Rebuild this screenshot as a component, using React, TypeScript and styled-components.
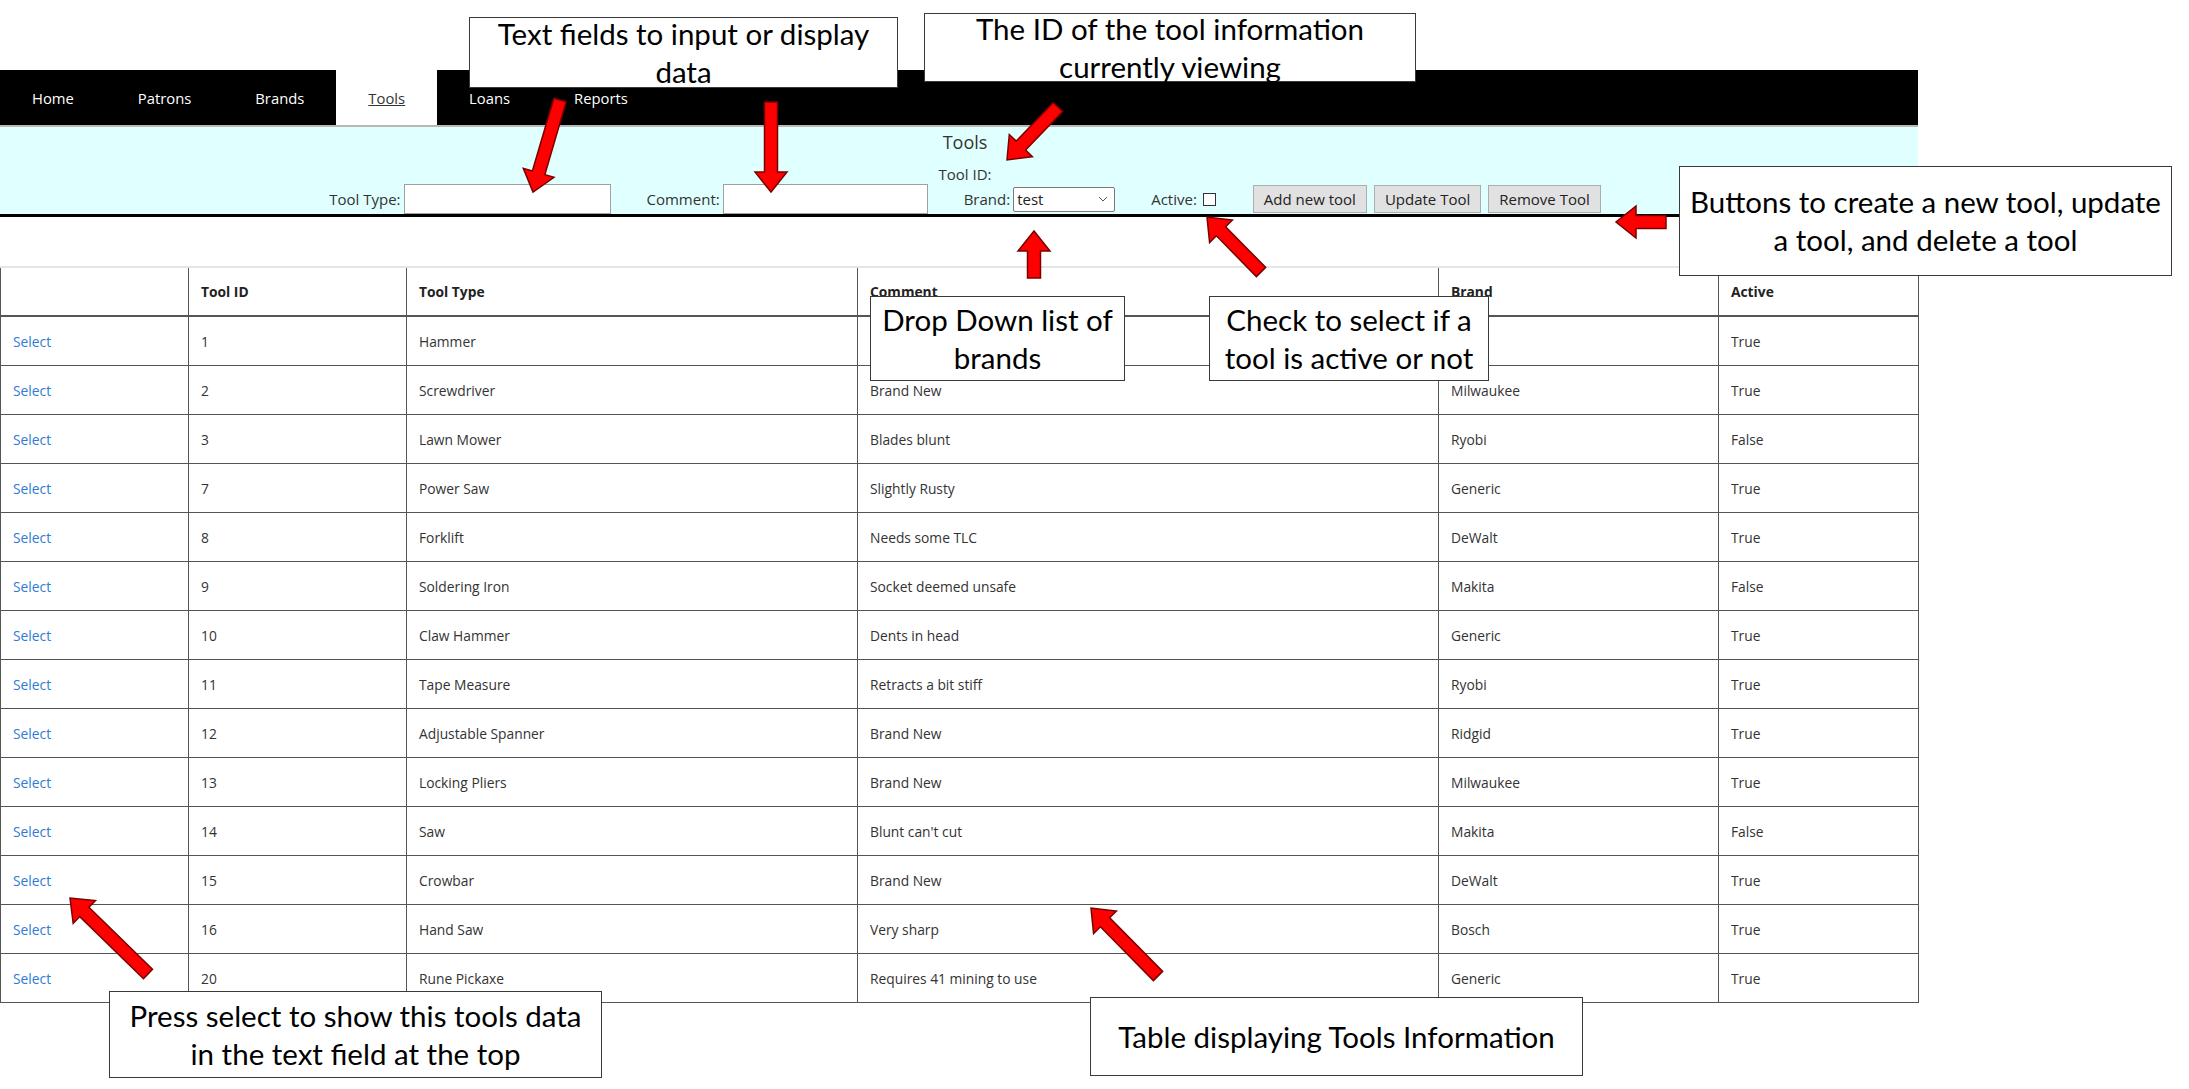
import React from "react";
import styled, { createGlobalStyle } from "styled-components";

const GlobalStyle = createGlobalStyle`
  html, body {
    margin: 0;
    padding: 0;
    background: #fff;
  }
  body {
    font-family: "Open Sans", "Noto Sans", sans-serif;
    color: #333;
  }
`;

type Tool = {
  id: number;
  type: string;
  comment: string;
  brand: string;
  active: boolean;
};

// first row's comment / brand sit under the callouts in the screenshot
const tools: Tool[] = [
  { id: 1, type: "Hammer", comment: "", brand: "", active: true },
  { id: 2, type: "Screwdriver", comment: "Brand New", brand: "Milwaukee", active: true },
  { id: 3, type: "Lawn Mower", comment: "Blades blunt", brand: "Ryobi", active: false },
  { id: 7, type: "Power Saw", comment: "Slightly Rusty", brand: "Generic", active: true },
  { id: 8, type: "Forklift", comment: "Needs some TLC", brand: "DeWalt", active: true },
  { id: 9, type: "Soldering Iron", comment: "Socket deemed unsafe", brand: "Makita", active: false },
  { id: 10, type: "Claw Hammer", comment: "Dents in head", brand: "Generic", active: true },
  { id: 11, type: "Tape Measure", comment: "Retracts a bit stiff", brand: "Ryobi", active: true },
  { id: 12, type: "Adjustable Spanner", comment: "Brand New", brand: "Ridgid", active: true },
  { id: 13, type: "Locking Pliers", comment: "Brand New", brand: "Milwaukee", active: true },
  { id: 14, type: "Saw", comment: "Blunt can't cut", brand: "Makita", active: false },
  { id: 15, type: "Crowbar", comment: "Brand New", brand: "DeWalt", active: true },
  { id: 16, type: "Hand Saw", comment: "Very sharp", brand: "Bosch", active: true },
  { id: 20, type: "Rune Pickaxe", comment: "Requires 41 mining to use", brand: "Generic", active: true },
];

const navLinks = ["Home", "Patrons", "Brands", "Tools", "Loans", "Reports"];

// callout boxes drawn over the screenshot
const callouts = [
  { left: 469, top: 17, width: 429, height: 71, lines: ["Text fields to input or display", "data"] },
  { left: 924, top: 13, width: 492, height: 69, lines: ["The ID of the tool information", "currently viewing"] },
  { left: 1679, top: 166, width: 493, height: 110, lines: ["Buttons to create a new tool, update", "a tool, and delete a tool"] },
  { left: 870, top: 296, width: 255, height: 85, lines: ["Drop Down list of", "brands"] },
  { left: 1209, top: 296, width: 280, height: 85, lines: ["Check to select if a", "tool is active or not"] },
  { left: 109, top: 991, width: 493, height: 87, lines: ["Press select to show this tools data", "in the text field at the top"] },
  { left: 1090, top: 997, width: 493, height: 79, lines: ["Table displaying Tools Information"] },
];

// [tailX, tailY, tipX, tipY]
const arrows: [number, number, number, number][] = [
  [560, 100, 533, 192],
  [771, 102, 771, 192],
  [1058, 107, 1007, 160],
  [1034, 278, 1034, 231],
  [1261, 272, 1207, 217],
  [1666, 222, 1616, 222],
  [148, 974, 70, 898],
  [1158, 976, 1091, 908],
];

const arrowPoints = (x1: number, y1: number, x2: number, y2: number) => {
  const shaft = 13;
  const head = 32;
  const headLen = 20;
  const len = Math.hypot(x2 - x1, y2 - y1);
  const ux = (x2 - x1) / len;
  const uy = (y2 - y1) / len;
  const px = -uy;
  const py = ux;
  const bx = x2 - ux * headLen;
  const by = y2 - uy * headLen;
  const pts = [
    [x1 + (px * shaft) / 2, y1 + (py * shaft) / 2],
    [bx + (px * shaft) / 2, by + (py * shaft) / 2],
    [bx + (px * head) / 2, by + (py * head) / 2],
    [x2, y2],
    [bx - (px * head) / 2, by - (py * head) / 2],
    [bx - (px * shaft) / 2, by - (py * shaft) / 2],
    [x1 - (px * shaft) / 2, y1 - (py * shaft) / 2],
  ];
  return pts.map((p) => p.map((v) => v.toFixed(1)).join(",")).join(" ");
};

export default function App() {
  return (
    <Page>
      <GlobalStyle />
      <Frame>
        <NavBar>
          {navLinks.map((l) => (
            <NavItem key={l} $active={l === "Tools"}>
              {l}
            </NavItem>
          ))}
        </NavBar>

        <FormSection>
          <Title>Tools</Title>
          <ToolId>Tool ID:</ToolId>
          <Controls>
            <Field>
              <Label>Tool Type:</Label>
              <TextInput type="text" $width={207} />
            </Field>
            <Field>
              <Label>Comment:</Label>
              <TextInput type="text" $width={205} />
            </Field>
            <Field>
              <Label>Brand:</Label>
              <SelectBox>
                <span>test</span>
                <svg width="10" height="6" viewBox="0 0 10 6">
                  <path d="M1 1 L5 5 L9 1" fill="none" stroke="#555" strokeWidth="1" />
                </svg>
              </SelectBox>
            </Field>
            <Field>
              <Label>Active:</Label>
              <Check type="checkbox" />
            </Field>
            <Buttons>
              <Button>Add new tool</Button>
              <Button>Update Tool</Button>
              <Button>Remove Tool</Button>
            </Buttons>
          </Controls>
        </FormSection>

        <Table>
          <colgroup>
            <col style={{ width: 188 }} />
            <col style={{ width: 218 }} />
            <col style={{ width: 451 }} />
            <col style={{ width: 581 }} />
            <col style={{ width: 280 }} />
            <col style={{ width: 200 }} />
          </colgroup>
          <thead>
            <tr>
              <Th></Th>
              <Th>Tool ID</Th>
              <Th>Tool Type</Th>
              <Th>Comment</Th>
              <Th>Brand</Th>
              <Th>Active</Th>
            </tr>
          </thead>
          <tbody>
            {tools.map((t) => (
              <tr key={t.id}>
                <Td>
                  <SelectLink href="#">Select</SelectLink>
                </Td>
                <Td>{t.id}</Td>
                <Td>{t.type}</Td>
                <Td>{t.comment}</Td>
                <Td>{t.brand}</Td>
                <Td>{t.active ? "True" : "False"}</Td>
              </tr>
            ))}
          </tbody>
        </Table>
      </Frame>

      {callouts.map((c, i) => (
        <Callout key={i} $left={c.left} $top={c.top} $width={c.width} $height={c.height}>
          {c.lines.map((ln) => (
            <div key={ln}>{ln}</div>
          ))}
        </Callout>
      ))}

      <ArrowLayer width="2189" height="1089" viewBox="0 0 2189 1089">
        {arrows.map((a, i) => (
          <polygon
            key={i}
            points={arrowPoints(a[0], a[1], a[2], a[3])}
            fill="#ff0000"
            stroke="#7a0000"
            strokeWidth="1.5"
            strokeLinejoin="miter"
          />
        ))}
      </ArrowLayer>
    </Page>
  );
}

const Page = styled.div`
  position: relative;
  width: 2189px;
  height: 1089px;
  overflow: hidden;
  padding-top: 70px;
  box-sizing: border-box;
`;

const Frame = styled.div`
  width: 1918px;
`;

const NavBar = styled.nav`
  display: flex;
  height: 55px;
  background: #000;
  border-bottom: 2px solid #b8b8b8;
`;

const NavItem = styled.a<{ $active?: boolean }>`
  display: flex;
  align-items: center;
  padding: 0 32px;
  font-size: 14.8px;
  color: ${(p) => (p.$active ? "#333" : "#fff")};
  background: ${(p) => (p.$active ? "#fff" : "transparent")};
  text-decoration: ${(p) => (p.$active ? "underline" : "none")};
  cursor: pointer;
`;

const FormSection = styled.section`
  height: 87px;
  background: #e0ffff;
  border-bottom: 3px solid #000;
  display: flex;
  flex-direction: column;
  align-items: center;
  padding-left: 12px;
  overflow: hidden;
`;

const Title = styled.div`
  margin-top: 2px;
  font-size: 18px;
  line-height: 26px;
  color: #333;
`;

const ToolId = styled.div`
  margin-top: 9px;
  font-size: 15px;
  line-height: 20px;
  color: #333;
`;

const Controls = styled.div`
  height: 30px;
  display: flex;
  align-items: center;
  gap: 36px;
`;

const Field = styled.div`
  display: flex;
  align-items: center;
  gap: 3px;
`;

const Label = styled.label`
  font-size: 15px;
  color: #333;
`;

const TextInput = styled.input<{ $width: number }>`
  width: ${(p) => p.$width}px;
  height: 30px;
  box-sizing: border-box;
  border: 1px solid #a0a0a0;
  background: #fff;
  font-family: inherit;
  font-size: 15px;
  padding: 0 4px;
  margin: 0;
`;

const SelectBox = styled.div`
  width: 102px;
  height: 25px;
  box-sizing: border-box;
  display: flex;
  align-items: center;
  justify-content: space-between;
  padding: 0 6px 0 3px;
  border: 1px solid #7a7a7a;
  border-radius: 2px;
  background: #fff;
  font-size: 15px;
  color: #222;
`;

const Check = styled.input`
  appearance: none;
  width: 13px;
  height: 13px;
  margin: 0 0 0 3px;
  border: 1px solid #333;
  background: #fff;
`;

const Buttons = styled.div`
  display: flex;
  align-items: center;
  gap: 7px;
  margin-left: 1px;
`;

const Button = styled.button`
  height: 28px;
  padding: 0 10px;
  background: #e1e1e1;
  border: 1px solid #adadad;
  font-family: inherit;
  font-size: 15px;
  color: #222;
`;

const Table = styled.table`
  margin-top: 49px;
  width: 1918px;
  table-layout: fixed;
  border-collapse: collapse;
  border-top: 2px solid #e6e6e6;
  font-size: 13.8px;
`;

const Th = styled.th`
  height: 47px;
  padding: 0 12px;
  text-align: left;
  font-weight: 700;
  color: #222;
  border-left: 1px solid #555;
  border-right: 1px solid #555;
  border-top: 2px solid #e6e6e6;
  border-bottom: 2px solid #555;
`;

const Td = styled.td`
  height: 48px;
  padding: 0 12px;
  color: #333;
  border: 1px solid #555;
`;

const SelectLink = styled.a`
  color: #2f7bd6;
  text-decoration: none;
`;

const Callout = styled.div<{ $left: number; $top: number; $width: number; $height: number }>`
  position: absolute;
  left: ${(p) => p.$left}px;
  top: ${(p) => p.$top}px;
  width: ${(p) => p.$width}px;
  height: ${(p) => p.$height}px;
  box-sizing: border-box;
  border: 1.5px solid #3a3a3a;
  background: #fff;
  display: flex;
  flex-direction: column;
  align-items: center;
  justify-content: center;
  font-family: Lato, "Open Sans", sans-serif;
  font-size: 29.5px;
  line-height: 38px;
  color: #000;
  white-space: nowrap;
`;

const ArrowLayer = styled.svg`
  position: absolute;
  left: 0;
  top: 0;
  pointer-events: none;
`;
